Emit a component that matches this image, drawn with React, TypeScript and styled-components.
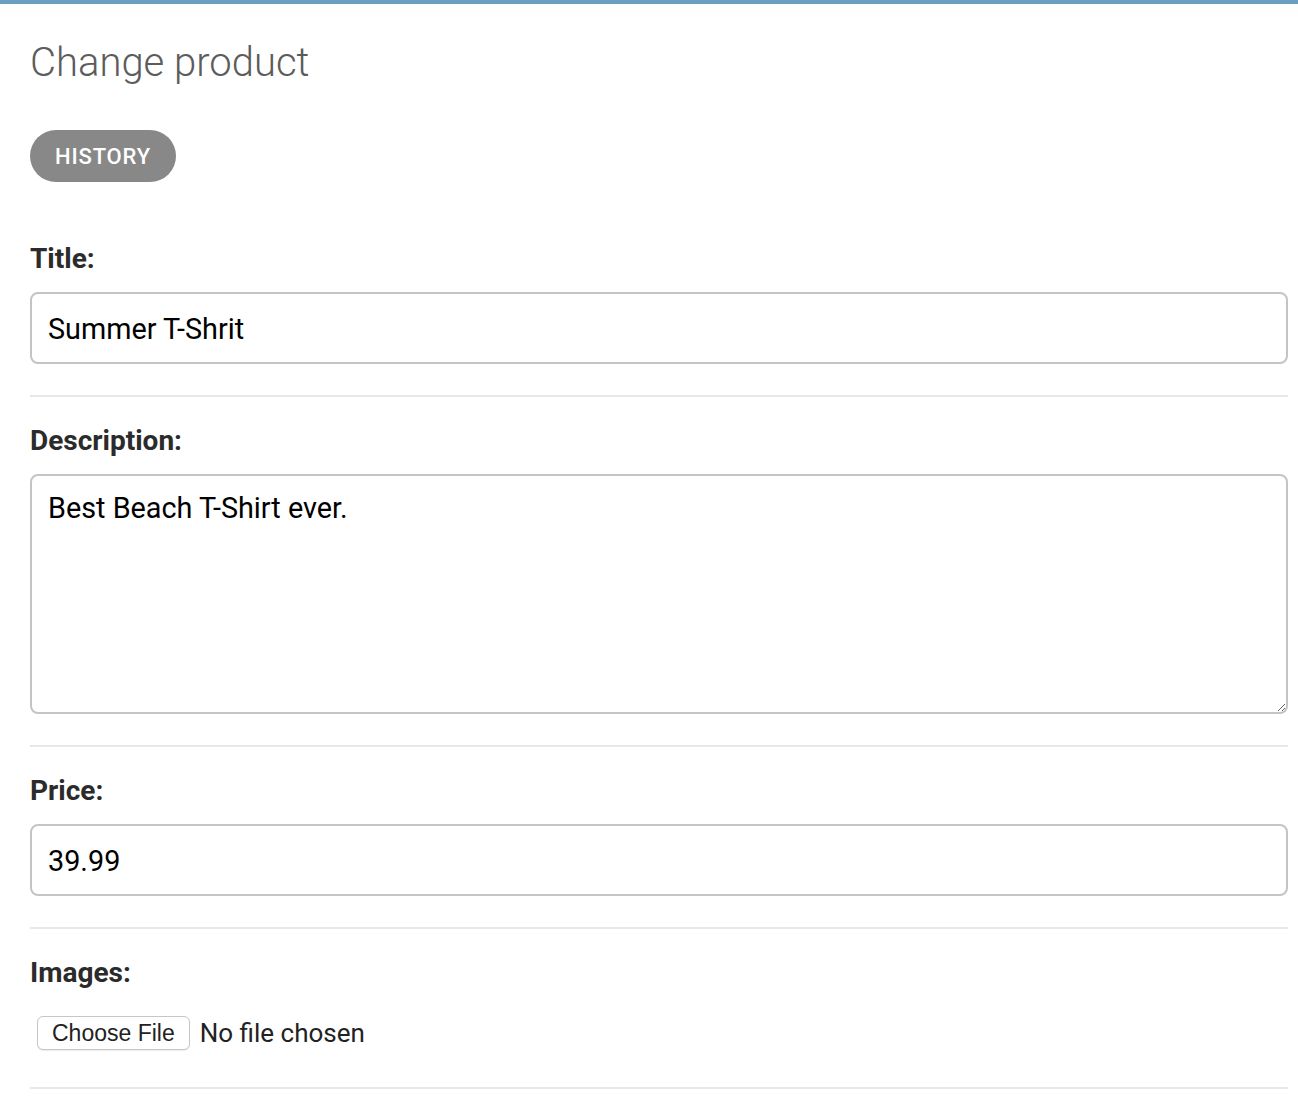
import React from "react";
import styled, { createGlobalStyle } from "styled-components";

const GlobalStyle = createGlobalStyle`
  html, body {
    margin: 0;
    padding: 0;
    background: #fff;
    font-family: Roboto, "Noto Sans", "Liberation Sans", sans-serif;
    color: #333;
  }
`;

const TopBar = styled.div`
  height: 4px;
  background: #6b9fc1;
`;

const Content = styled.main`
  padding: 35px 10px 0 30px;
`;

const Heading = styled.h1`
  margin: 0;
  font-size: 40px;
  line-height: 48px;
  font-weight: 300;
  color: #5c5c5c;
`;

const ObjectTools = styled.div`
  display: flex;
  margin-top: 43px;
`;

const HistoryButton = styled.a`
  display: inline-flex;
  align-items: center;
  justify-content: center;
  height: 52px;
  width: 146px;
  box-sizing: border-box;
  border-radius: 26px;
  background: #888;
  color: #fff;
  font-size: 22px;
  font-weight: 500;
  letter-spacing: 0.8px;
  text-transform: uppercase;
  text-decoration: none;
  cursor: pointer;
`;

const Form = styled.form`
  margin-top: 59px;
`;

const Row = styled.div<{ first?: boolean }>`
  padding: ${(p) => (p.first ? "0" : "26px")} 0 31px;
  border-bottom: 2px solid #e8e8e8;
`;

const Label = styled.label`
  display: block;
  font-size: 28px;
  line-height: 36px;
  font-weight: 700;
  color: #2b2b2b;
  margin-bottom: 15px;
`;

const TextInput = styled.input`
  display: block;
  box-sizing: border-box;
  width: 100%;
  height: 72px;
  padding: 2px 16px 0;
  border: 2px solid #c4c4c4;
  border-radius: 8px;
  font-family: inherit;
  font-size: 28.8px;
  color: #000;
  background: #fff;
  outline: none;
`;

const TextArea = styled.textarea`
  display: block;
  box-sizing: border-box;
  width: 100%;
  height: 240px;
  padding: 14px 16px;
  border: 2px solid #c4c4c4;
  border-radius: 8px;
  font-family: inherit;
  font-size: 28.8px;
  line-height: 36px;
  color: #000;
  background: #fff;
  outline: none;
`;

const FileRow = styled.div`
  display: flex;
  align-items: center;
  gap: 10px;
  padding: 10px 0 6px 7px;
`;

const FileButton = styled.button`
  height: 34px;
  padding: 0 14px;
  border: 1px solid #c6c6c6;
  border-radius: 6px;
  background: #fff;
  box-shadow: 0 1px 1px rgba(0, 0, 0, 0.08);
  font-family: "Liberation Sans", Arial, sans-serif;
  font-size: 23px;
  color: #222;
  cursor: pointer;
`;

const FileName = styled.span`
  font-size: 26px;
  line-height: 30px;
  color: #222;
`;

export default function App() {
  return (
    <>
      <GlobalStyle />
      <TopBar />
      <Content>
        <Heading>Change product</Heading>
        <ObjectTools>
          <HistoryButton>History</HistoryButton>
        </ObjectTools>
        <Form>
          <Row first>
            <Label htmlFor="id_title">Title:</Label>
            <TextInput id="id_title" defaultValue="Summer T-Shrit" />
          </Row>
          <Row>
            <Label htmlFor="id_description">Description:</Label>
            <TextArea id="id_description" defaultValue="Best Beach T-Shirt ever." />
          </Row>
          <Row>
            <Label htmlFor="id_price">Price:</Label>
            <TextInput id="id_price" defaultValue="39.99" />
          </Row>
          <Row>
            <Label>Images:</Label>
            <FileRow>
              <FileButton type="button">Choose File</FileButton>
              <FileName>No file chosen</FileName>
            </FileRow>
          </Row>
        </Form>
      </Content>
    </>
  );
}
